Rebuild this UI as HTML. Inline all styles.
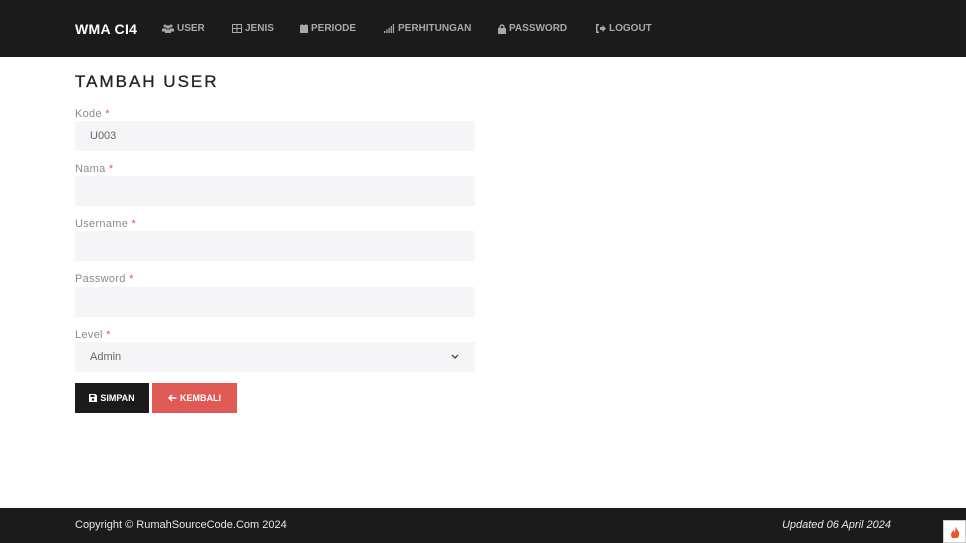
<!DOCTYPE html>
<html><head><meta charset="utf-8"><style>
*{margin:0;padding:0;box-sizing:border-box}
body{width:966px;height:543px;background:#fff;font-family:"Liberation Sans",sans-serif;position:relative;overflow:hidden}
.nav{position:absolute;left:0;top:0;width:966px;height:57px;background:#1b1b1b}
.brand{position:absolute;left:75px;top:21px;color:#fff;font-size:14px;font-weight:bold;letter-spacing:.3px}
.ni{position:absolute;top:23px;color:#a8a8a8;font-size:10px;font-weight:bold;letter-spacing:0;display:flex;align-items:center;gap:3px}
.ni svg{fill:#a8a8a8}
h1{position:absolute;left:75px;top:72px;font-size:17px;font-weight:normal;letter-spacing:2px;color:#222;-webkit-text-stroke:.3px #222}
.lbl{position:absolute;left:75px;font-size:11px;color:#8a8a8a;letter-spacing:.3px}
.lbl span{color:#e05555}
.in{position:absolute;left:75px;width:400px;height:30px;background:#f5f5f7;font-size:11px;color:#666;padding:9px 15px}
.btn{position:absolute;top:383px;height:30px;color:#fff;font-size:9px;font-weight:bold;display:flex;align-items:center;justify-content:center;gap:3px}
.foot{position:absolute;left:0;top:508px;width:966px;height:35px;background:#1b1b1b;color:#e8e8e8;font-size:11px}
</style></head><body>
<div class="nav">
<div class="brand">WMA CI4</div>
<div class="ni" style="left:162px"><svg width="12" height="9" viewBox="0 0 12 9"><circle cx="3" cy="2" r="1.5"/><circle cx="9" cy="2" r="1.5"/><circle cx="6" cy="3" r="1.8"/><rect x="0" y="4.5" width="4" height="3"/><rect x="8" y="4.5" width="4" height="3"/><rect x="3" y="5.5" width="6" height="3.5"/></svg>USER</div>
<div class="ni" style="left:232px"><svg width="10" height="9" viewBox="0 0 10 9"><path d="M0 0h10v9H0z M1 1v3h3.5V1z M5.5 1v3H9V1z M1 5v3h3.5V5z M5.5 5v3H9V5z" fill-rule="evenodd"/></svg>JENIS</div>
<div class="ni" style="left:300px"><svg width="8" height="9" viewBox="0 0 8 9"><rect x="0" y="1" width="8" height="8"/><rect x="1.5" y="0" width="1" height="2"/><rect x="5.5" y="0" width="1" height="2"/></svg>PERIODE</div>
<div class="ni" style="left:384px"><svg width="11" height="9" viewBox="0 0 11 9"><rect x="0" y="7" width="1.3" height="2"/><rect x="2.2" y="5.5" width="1.3" height="3.5"/><rect x="4.4" y="4" width="1.3" height="5"/><rect x="6.6" y="2" width="1.3" height="7"/><rect x="8.8" y="0" width="1.3" height="9"/></svg>PERHITUNGAN</div>
<div class="ni" style="left:498px"><svg width="8" height="10" viewBox="0 0 8 10"><path d="M2 4V3a2 2 0 0 1 4 0v1" stroke="#a8a8a8" stroke-width="1.4" fill="none"/><rect x="0" y="4" width="8" height="6"/></svg>PASSWORD</div>
<div class="ni" style="left:596px"><svg width="10" height="9" viewBox="0 0 10 9"><path d="M3 0H0v9h3V7.5H1.5v-6H3z M4 3h2.5V1L10 4.5 6.5 8V6H4z"/></svg>LOGOUT</div>
</div>
<h1>TAMBAH USER</h1>
<div class="lbl" style="top:108px">Kode <span>*</span></div>
<div class="in" style="top:121px">U003</div>
<div class="lbl" style="top:163px">Nama <span>*</span></div>
<div class="in" style="top:176px"></div>
<div class="lbl" style="top:218px">Username <span>*</span></div>
<div class="in" style="top:231px"></div>
<div class="lbl" style="top:273px">Password <span>*</span></div>
<div class="in" style="top:287px"></div>
<div class="lbl" style="top:329px">Level <span>*</span></div>
<div class="in" style="top:342px">Admin<svg style="position:absolute;right:16px;top:12px" width="8" height="6" viewBox="0 0 8 6"><path d="M1 1l3 3 3-3" stroke="#444" stroke-width="1.3" fill="none"/></svg></div>
<div class="btn" style="left:75px;width:74px;background:#1b1b1b"><svg width="8" height="8" viewBox="0 0 8 8"><path d="M0 0h6.5L8 1.5V8H0z" fill="#fff"/><rect x="1.5" y="1" width="4" height="2" fill="#1b1b1b"/><circle cx="4" cy="5.5" r="1.2" fill="#1b1b1b"/></svg>SIMPAN</div>
<div class="btn" style="left:152px;width:85px;background:#e05a55"><svg width="9" height="8" viewBox="0 0 9 8"><path d="M4 1L1 4l3 3M1 4h7.5" stroke="#fff" stroke-width="1.5" fill="none"/></svg> KEMBALI</div>
<div class="foot"><div style="position:absolute;left:75px;top:11px">Copyright © RumahSourceCode.Com 2024</div><div style="position:absolute;right:75px;top:11px;font-style:italic">Updated 06 April 2024</div>
<div style="position:absolute;left:943px;top:12px;width:23px;height:23px;background:#fff;border:1px solid #ccc"><svg style="position:absolute;left:6px;top:5px" width="10" height="12" viewBox="0 0 10 12"><path d="M5 0C6 3 10 5 9 9a4 4 0 0 1-8 0C1 6 3 6 3 4c1 1 2 2 2 3 0-2 1-4 0-7z" fill="#e8562a"/></svg></div></div>
</body></html>
